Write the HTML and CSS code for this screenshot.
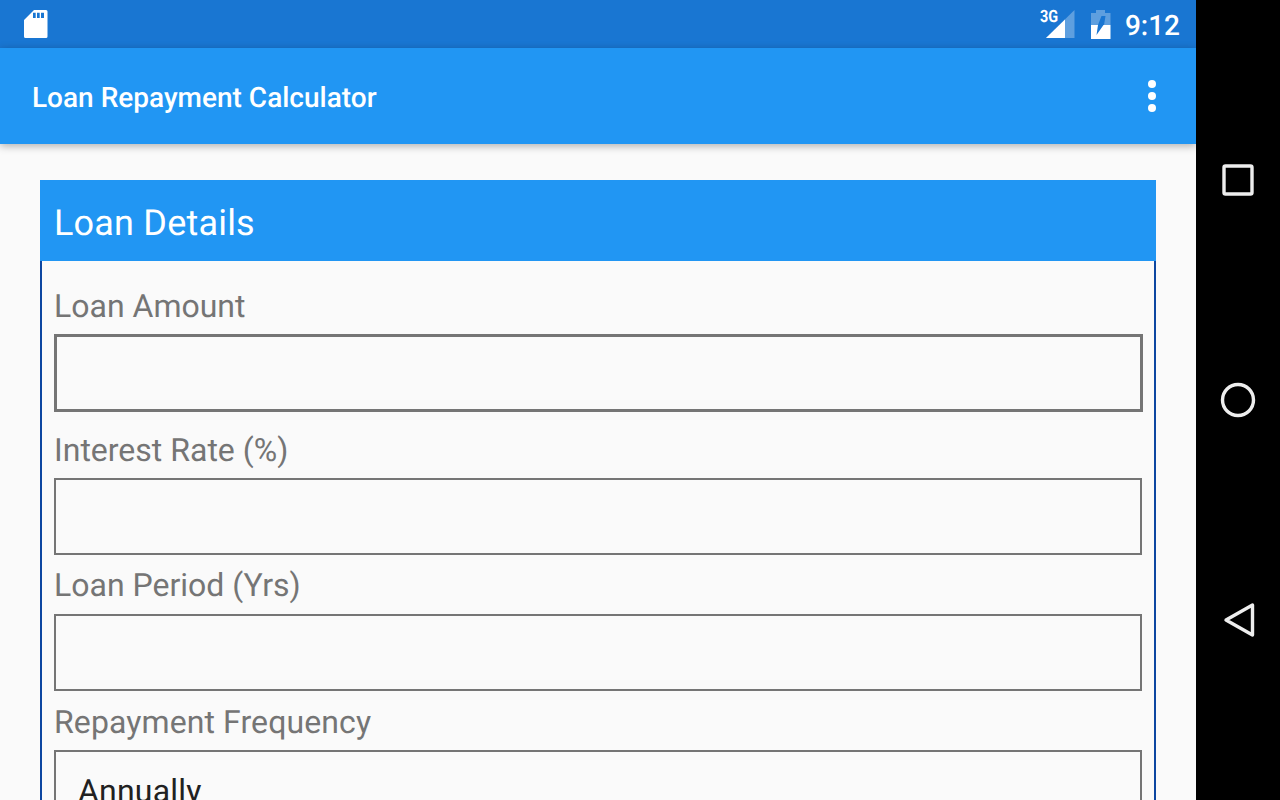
FILE: index.html
```html
<!DOCTYPE html>
<html lang="en">
<head>
    <meta charset="UTF-8">
    <meta name="viewport" content="width=device-width, initial-scale=1.0">
    <title>Loan Repayment Calculator</title>
    <link rel="stylesheet" href="styles.css">
</head>
<body>

<div class="screen">
    <div class="status-bar">
        <svg class="sd-icon" width="24" height="28" viewBox="0 0 24 28">
            <path fill="#ffffff" fill-rule="evenodd" d="M10 0H22Q23.5 0 23.5 1.5V26.5Q23.5 28 22 28H1.5Q0 28 0 26.5V10ZM9 2.7V8H11.7V2.7ZM13 2.7V8H15.7V2.7ZM17 2.7V8H20V2.7Z"/>
        </svg>
        <div class="status-right">
            <div class="signal">
                <span class="network-type">3G</span>
                <svg width="29" height="28" viewBox="0 0 29 28">
                    <path fill="#ffffff" fill-opacity="0.3" d="M28.5 0V28H0Z"/>
                    <path fill="#ffffff" d="M19 9.5V28H0Z"/>
                </svg>
            </div>
            <svg class="battery-icon" width="20" height="29" viewBox="0 0 20 29">
                <path fill="#ffffff" fill-opacity="0.3" fill-rule="evenodd" d="M5 0H14V3H19.5V15H0V3H5ZM10.5 6L7 15H13L14.5 6Z"/>
                <path fill="#ffffff" d="M0 15H7L5.5 25L12.5 15H19.5V29H0Z"/>
            </svg>
            <span class="clock">9:12</span>
        </div>
    </div>

    <div class="toolbar">
        <span class="toolbar-title">Loan Repayment Calculator</span>
        <div class="overflow-menu">
            <span class="dot"></span>
            <span class="dot"></span>
            <span class="dot"></span>
        </div>
    </div>

    <div class="content">
        <div class="panel">
            <div class="panel-header">Loan Details</div>
            <div class="panel-body">
                <div class="field field-first">
                    <label for="amount">Loan Amount</label>
                    <input type="text" id="amount" class="focused">
                </div>
                <div class="field field-rate">
                    <label for="rate">Interest Rate (%)</label>
                    <input type="text" id="rate">
                </div>
                <div class="field field-period">
                    <label for="period">Loan Period (Yrs)</label>
                    <input type="text" id="period">
                </div>
                <div class="field field-frequency">
                    <label>Repayment Frequency</label>
                    <div class="select-box">Annually</div>
                </div>
            </div>
        </div>
    </div>
</div>

<div class="nav-bar">
    <svg width="48" height="48" viewBox="0 0 48 48">
        <rect x="10" y="10" width="28" height="28" rx="1.5" fill="none" stroke="#eeeeee" stroke-width="3.4"/>
    </svg>
    <svg width="48" height="48" viewBox="0 0 48 48">
        <circle cx="24" cy="24" r="15.5" fill="none" stroke="#eeeeee" stroke-width="3.4"/>
    </svg>
    <svg width="48" height="48" viewBox="0 0 48 48">
        <path d="M12 24L38.5 9V39Z" fill="none" stroke="#eeeeee" stroke-width="3.4" stroke-linejoin="round"/>
    </svg>
</div>

</body>
</html>
```
FILE: styles.css
```css
html, body {
    height: 100%;
}

body {
    display: flex;
    margin: 0;
    height: 800px;
    overflow: hidden;
    font-family: Roboto, "Liberation Sans", sans-serif;
    text-rendering: geometricPrecision;
    background-color: #000000;
}

.screen {
    width: 1196px;
    height: 800px;
    overflow: hidden;
    background-color: #fafafa;
}

.status-bar {
    display: flex;
    align-items: center;
    justify-content: space-between;
    height: 48px;
    padding: 0 16px 0 24px;
    box-sizing: border-box;
    background-color: #1976d2;
}

.sd-icon {
    display: block;
}

.status-right {
    display: flex;
    align-items: center;
}

.signal {
    position: relative;
    width: 35px;
    height: 28px;
    padding-left: 7px;
    box-sizing: border-box;
}

.signal svg {
    display: block;
}

.network-type {
    position: absolute;
    left: 1px;
    top: 0;
    font-size: 17px;
    line-height: 15px;
    font-weight: 700;
    color: #ffffff;
    transform: scaleX(0.85);
    transform-origin: left top;
}

.battery-icon {
    display: block;
    margin-left: 17px;
}

.clock {
    margin-left: 14px;
    padding-top: 3px;
    font-size: 28px;
    line-height: 42px;
    font-weight: 500;
    color: #ffffff;
}

.toolbar {
    position: relative;
    display: flex;
    align-items: center;
    justify-content: space-between;
    height: 96px;
    padding: 0 40px 0 32px;
    box-sizing: border-box;
    background-color: #2196f3;
    box-shadow: 0 2px 8px rgba(0, 0, 0, 0.3);
}

.toolbar-title {
    padding-top: 3px;
    font-size: 28px;
    line-height: 34px;
    font-weight: 500;
    color: #ffffff;
}

.overflow-menu {
    display: flex;
    flex-direction: column;
    gap: 4px;
}

.dot {
    width: 8px;
    height: 8px;
    border-radius: 50%;
    background-color: #ffffff;
}

.content {
    padding: 36px 40px 0;
}

.panel-header {
    height: 81px;
    padding-left: 14px;
    font-size: 36px;
    line-height: 86px;
    letter-spacing: 0.2px;
    color: #ffffff;
    background-color: #2196f3;
}

.panel-body {
    padding: 0 12px;
    border-left: 2px solid #0d47a1;
    border-right: 2px solid #0d47a1;
}

.field label {
    display: block;
    height: 40px;
    font-size: 32px;
    line-height: 40px;
    color: #757575;
}

.field input,
.select-box {
    display: block;
    width: 100%;
    height: 77px;
    margin: 8px 0 0;
    padding: 0;
    box-sizing: border-box;
    border: 2px solid #757575;
    border-radius: 0;
    outline: none;
    background-color: #fafafa;
}

.field input.focused {
    width: calc(100% + 1px);
    height: 78px;
    border-width: 3px;
}

.field-first {
    padding-top: 25px;
}

.field-rate {
    margin-top: 18px;
}

.field-period {
    margin-top: 10px;
}

.field-period input {
    margin-top: 9px;
}

.field-frequency {
    margin-top: 11px;
}

.field-frequency label {
    letter-spacing: 0.1px;
}

.select-box {
    height: 120px;
    padding: 19px 22px 0;
    font-size: 32px;
    line-height: 40px;
    letter-spacing: 0.2px;
    color: #212121;
}

.nav-bar {
    display: flex;
    flex-direction: column;
    align-items: center;
    gap: 172px;
    width: 84px;
    height: 800px;
    padding-top: 156px;
    box-sizing: border-box;
    background-color: #000000;
}

.nav-bar svg {
    display: block;
    flex: none;
}
```
